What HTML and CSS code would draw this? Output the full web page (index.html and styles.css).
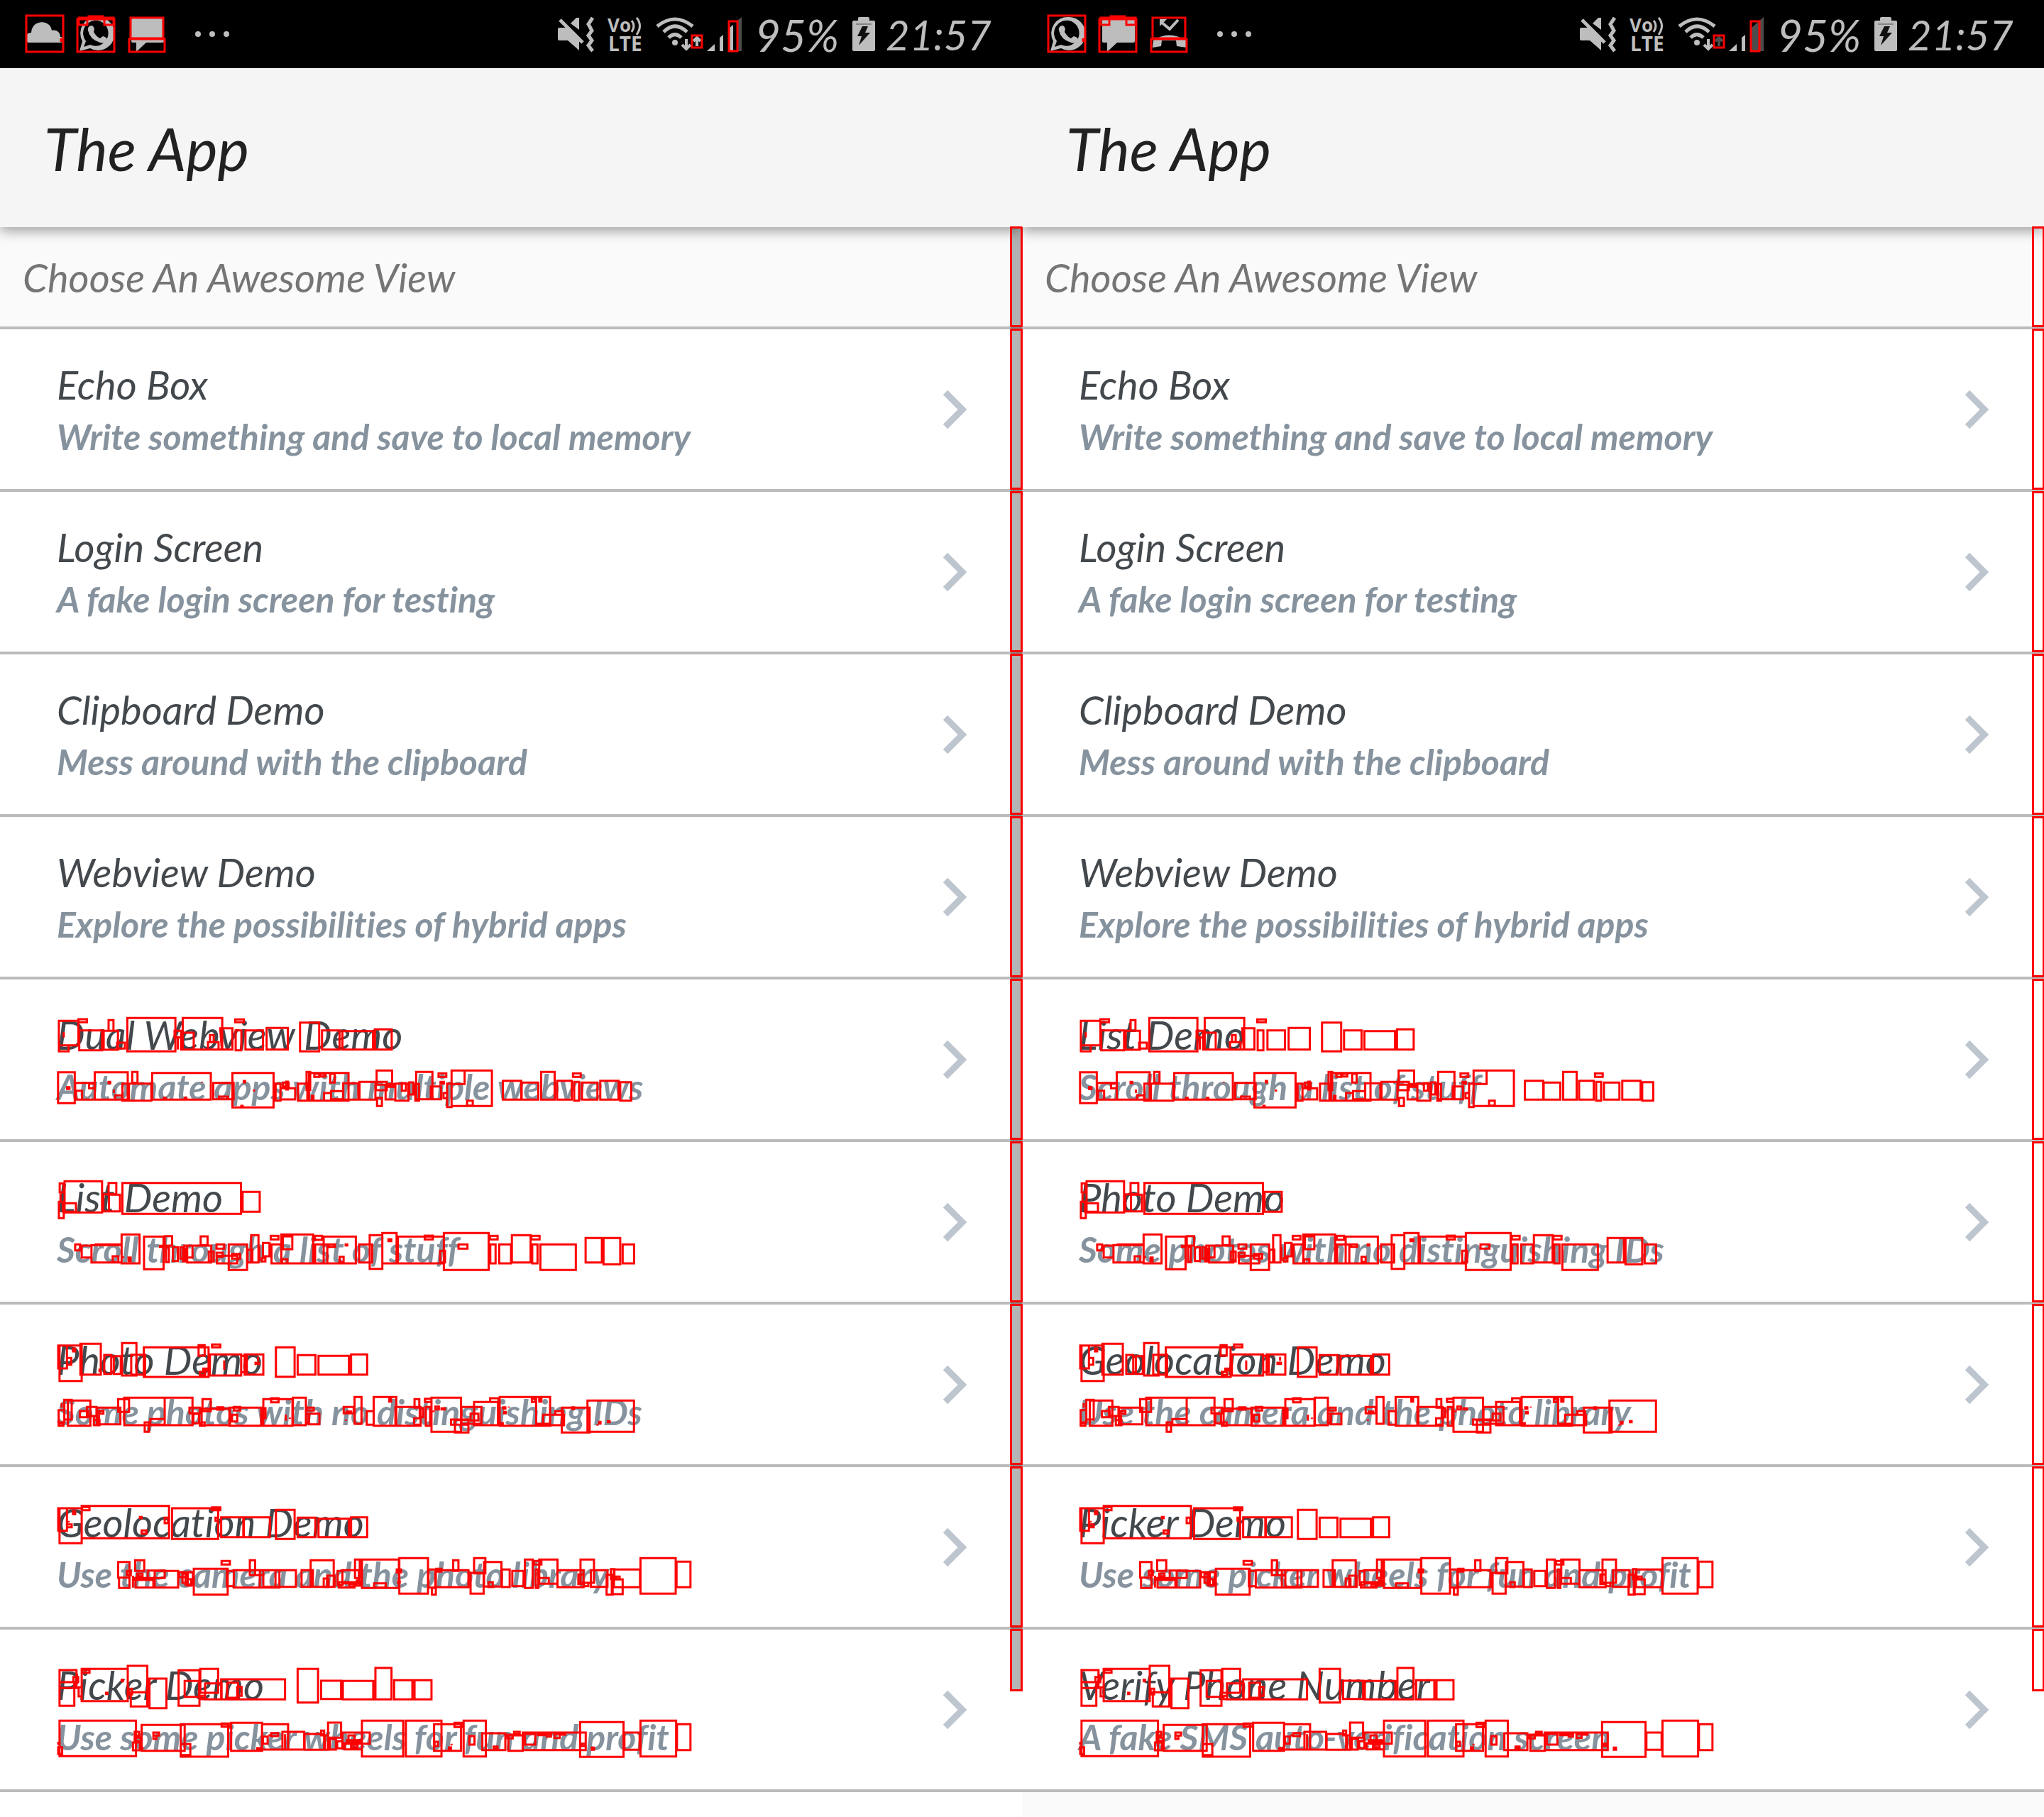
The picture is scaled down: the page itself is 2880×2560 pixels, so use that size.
FILE: index.html
```html
<!DOCTYPE html>
<html lang="en">
<head>
<meta charset="utf-8">
<title>The App</title>
<link rel="stylesheet" href="styles.css">
</head>
<body>
<svg class="defs" aria-hidden="true">
  <defs>
    <g id="i-cloud"><path d="M4 60c-6-2-5-14 4-14 1-19 27-19 29-3 7-2 12 3 12 9 5 0 5 8 0 8z" transform="translate(-2 0)"/></g>
    <g id="i-chat"><path d="M28 24a23 23 0 0 1 0 47q-6 0-11-3L2 72l4-14a23 23 0 0 1 22-34zm0 5a18 18 0 0 0-17 29l-3 8 9-3a18 18 0 1 0 11-34z" fill-rule="evenodd"/><path d="M16 37q5-3 7 4l-1 4q4 7 9 9l4-3q8 2 5 7-3 4-9 2-14-4-17-17-1-4 2-6z"/></g>
    <g id="i-msg"><path d="M5 26h42q2 0 2 2v30q0 2-2 2H24L10 73V60H5q-2 0-2-2V28q0-2 2-2z"/></g>
    <g id="i-missed"><path d="M3 57q21-15 47 0v10l-14-2-1-8H15l-1 8-12 2z"/><path d="M13 30l13 11 12-13" fill="none" stroke="#bdbdbd" stroke-width="4"/><path d="M12 27h10L12 37z"/></g>
    <g id="i-dots"><circle cx="25" cy="48" r="4"/><circle cx="45" cy="48" r="4"/><circle cx="65" cy="48" r="4"/></g>
    <g id="i-mute"><path d="M4 39h10l5 5 13 14v13L16 57H4q-2 0-2-2V41q0-2 2-2z"/><path d="M20 33l8-8h4v17z"/><path d="M5 28l32 32" stroke="#bdbdbd" stroke-width="5"/><path d="M51 25l-6 9 5 9-5 7 5 7-5 7 6 8" fill="none" stroke="#bdbdbd" stroke-width="5"/></g>
    <g id="i-volte"><text x="0" y="45" font-size="26">Vo</text><text x="1" y="72" font-size="28">LTE</text><path d="M34 29q6 7 0 16M41 25q9 11 0 24" fill="none" stroke="#bdbdbd" stroke-width="3"/></g>
    <g id="i-wifi"><path d="M6 37q25-20 50 0M15 45q16-16 33 0M22 53q9-9 18 0" fill="none" stroke="#bdbdbd" stroke-width="5"/><circle cx="31" cy="60" r="4"/><path d="M47 55v14M41 63l6 6 6-6" fill="none" stroke="#bdbdbd" stroke-width="4"/></g>
    <g id="i-battery"><path d="M8 29v-3q0-2 2-2h12q2 0 2 2v3h6q2 0 2 2v39q0 2-2 2H2q-2 0-2-2V31q0-2 2-2z"/><path d="M5 34h22" stroke="#4d4d4d" stroke-width="1"/><path d="M14 37h8l-4 9h7L9 64l4-13H7z" fill="#111"/></g>
    <g id="marks">
      <path d="M37 22H89V73H37ZM109 27H161V73H109ZM111 25H123V35H111ZM147 25H160V35H147ZM125 23H145V25H125ZM184 25H230V54H184ZM182 55H232V73H182ZM86 54V59M975 50H989V67H975ZM1027 30H1039V72H1027Z"/>
      <g transform="translate(60 1420) scale(.57398 .33333)">
        <path d="M40 55H88V158H40ZM40 158H64V184H40ZM88 48H109V61H88ZM90 95H146V179H90ZM162 52H174V97H162ZM150 97H185V177H150ZM183 147H202V172H183ZM208 43H326V184H208ZM344 43H441V176H344ZM324 97H344V125H324ZM332 120V176M340 105H371V176H340ZM406 145H432V176H406ZM411 115H420V145H411ZM436 86H466V176H440ZM473 49H494V61H473ZM474 95H488V179H474ZM498 95H541V176H498ZM550 85H602V176H550ZM632 62H679V184H632ZM686 95H729V176H686ZM736 98H811V176H736ZM816 91H857V176H816ZM52 102V125"/>
        <path d="M38 272H79V403H38ZM60 335H66V343H60ZM80 317H128V388H80ZM82 350H97V388H82ZM114 320H128V340H114ZM128 272H209V388H128ZM162 313H166V318H162ZM175 345V360M178 370H195V388H178ZM220 271H233V317H220ZM196 320H212V392H196ZM212 320H267V392H212ZM269 275H413V388H269ZM298 380H302V386H298ZM349 380H353V386H349ZM391 312V316M419 317H469V386H419ZM433 375H455V386H433ZM466 275H567V421H466ZM494 309H497V315H494ZM519 345V354M488 414H491V418H488ZM572 320H584V392H572ZM584 340H620V387H584ZM590 316H604V332H590ZM598 312H602V345H598ZM627 320H650V392H627ZM648 271H657V347H648ZM654 275H751V392H654ZM667 278H679V292H667ZM682 278H694V290H682ZM706 278H717V316H706ZM661 372H665V386H661ZM691 360H708V392H691ZM708 352H738V386H708ZM738 319H775V388H738ZM778 313H817V388H778ZM820 265H858V325H820ZM818 313H845V348H818ZM845 322H862V334H845ZM821 380H833V415H821ZM842 332H866V387H842ZM866 320H898V392H866ZM882 318H892V350H882ZM900 315H910V366H900ZM915 322H924V392H915ZM917 271H957V386H917ZM953 332H978V386H953ZM972 277H991V292H972ZM977 313H985V320H977ZM984 360H993V382H984ZM993 320H1004V419H993ZM1004 265H1103V415H1004ZM1004 265H1036V322H1004ZM1042 392H1056V413H1042ZM1130 308H1175V388H1130ZM1176 316H1217V388H1176ZM1224 271H1257V388H1224ZM1263 308H1299V388H1263ZM1302 277H1321V292H1302ZM1305 313H1317V392H1305ZM1324 316H1362V388H1324ZM1369 308H1414V388H1369ZM1418 314H1445V392H1418Z"/>
        <path d="M42 742H52V780H42ZM54 733H146V865H54ZM40 820H52V889H40ZM50 826H82V862H50ZM44 785V815M149 788H163V860H149ZM162 740H181V787H162ZM163 790H190V860H163ZM196 740H487V871H196ZM491 778H533V862H491ZM80 1000H92V1025H80ZM96 1005H120V1055H96ZM120 1003H194V1076H120ZM128 1000H194V1076M172 1050H186V1075H172ZM194 958H238V1080H194ZM197 1050V1058M211 1055H216V1070H211ZM249 967H297V1105H249ZM288 1006H292V1010H288ZM300 965H318V1005H300ZM303 1010H310V1075H303ZM320 1012H332V1070H320ZM338 1012H348V1060H338ZM345 1018H350V1072H345ZM348 1005H368V1055H348ZM355 1005H414V1076H355ZM388 966H405V1003H388ZM408 1030H420V1072H408ZM427 1000H446V1018H427ZM427 1035H442V1052H427ZM428 1048H478V1080H428ZM457 1000H502V1108H457ZM465 1040H485V1060H465ZM512 961H530V1076H512ZM503 1022H515V1076H503ZM532 1010V1070M541 994H557V1050H541ZM538 1058H547V1072H538ZM560 964H579V979H560ZM562 1000H586V1080H562ZM586 958H664V1080H586ZM590 966H613V1020H590ZM588 1063H601V1080H588ZM668 964H686V980H668ZM669 1000H699V1080H669ZM690 967H769V1080H690ZM703 1000H718V1010H703ZM744 1000H748V1004H744ZM729 1052H739V1074H729ZM777 1000H809V1076H777ZM803 961H834V1103H803ZM834 952H869V1080H834ZM849 978H856V986H849ZM872 967H985V1080H872ZM938 963H958V979H938ZM985 952H1095V1108H985ZM976 1027H988V1076H976ZM1021 1000H1043V1018H1021ZM1098 964H1117V979H1098ZM1099 1000H1112V1080H1099ZM1121 1000H1150V1080H1121ZM1152 961H1198V1076H1152ZM1200 964H1220V979H1200ZM1202 1000H1215V1080H1202ZM1222 1000H1309V1108H1222ZM1333 973H1373V1076H1333ZM1377 973H1418V1084H1377ZM1424 1000H1452V1080H1424Z"/>
      </g>
      <g transform="translate(60 1880) scale(.61224 .33333)">
        <path d="M36 47H56V144H36ZM39 47H90V197H39ZM87 40H134V170H87ZM70 60H75V72H70ZM56 100H66V128H56ZM131 145V160M142 87H158V167H142ZM158 95H164V160H158ZM164 92H180V167H164ZM183 37H216V174H183ZM204 86H236V170H204ZM233 55H382V180H233ZM359 46H373V90H359ZM390 43H409V55H390ZM362 158H374V172H362ZM370 145H378V152H370ZM385 85H457V174H385ZM418 110V150M457 91H470V160H457ZM465 85H508V170H465ZM490 120H498V125H490ZM496 95V112M537 55H580V179H537ZM587 88H628V170H587ZM635 91H705V170H635ZM710 85H747V170H710Z"/>
        <path d="M37 320H50V372H37ZM37 376H48V386H37ZM44 290V310M50 277H67V360H50ZM58 280H110V386H58ZM86 324H104V350H86ZM102 307H124V345H102ZM118 346H130V384H118ZM118 362H131V384H118ZM130 323H140V335H130ZM125 310H179V380H125ZM174 274H199V328H174ZM188 268H281V384H188ZM235 372H245V412H235ZM248 358H281V382H248ZM281 268H345V384H281ZM338 310H362V334H338ZM347 336H360V376H347ZM368 274H387V325H368ZM362 372H373V386H362ZM366 314H431V384H366ZM402 308H416V318H402ZM430 310H503V386H430ZM440 307H455V322H440ZM436 340H448V368H436ZM508 274H575V386H508ZM526 270H543V287H526ZM505 312H513V354H505ZM560 340V365M569 352V357M576 268H606V384H576ZM608 310H624V322H608ZM606 335H612V376H606ZM613 335H637V380H613ZM693 307H716V334H693ZM700 326H710V332H700ZM698 360V366M718 265H734V378H718ZM746 325H762V382H746ZM762 265H814V386H762ZM798 270H802V284H798ZM812 307H870V386H812ZM856 274H867V310H856ZM855 355H870V382H855ZM868 312H876V350H868ZM880 272H895V286H880ZM882 307H892V386H882ZM895 268H963V412H895ZM904 305H912V317H904ZM918 313H926V317H918ZM900 322V329M940 360H980V382H940ZM949 362H980V415H949ZM964 307H1010V378H964ZM993 286H1048V384H993ZM985 335H1003V364H985ZM1030 270H1049V286H1030ZM1052 265H1168V386H1052ZM1060 308H1065V314H1060ZM1062 328H1066V334H1062ZM1054 375H1059V381H1054ZM1073 305V310M1126 272H1134V286H1126ZM1136 265H1168V378H1136ZM1143 272H1148V284H1143ZM1152 340H1200V384H1152ZM1180 325H1198V340H1180ZM1195 310H1259V415H1195ZM1219 308H1223V316H1219ZM1254 280H1361V412H1254ZM1281 370H1284V377H1281ZM1301 367H1305V371H1301ZM1277 380V386"/>
        <path d="M36 735H56V830H36ZM39 735H90V883H39ZM70 748H75V760H70ZM56 803H67V815H56ZM60 788V796M90 725H291V862H90ZM91 730H108V743H91ZM224 772H228V777H224ZM228 829H239V842H228ZM281 775H289V798H281ZM298 735H404V865H298ZM390 731H409V743H390ZM398 775H404V788H398ZM411 773H462V857H411ZM463 773H523V857H463ZM537 742H580V865H537ZM587 775H628V857H587ZM635 779H705V857H635ZM710 773H747V857H710Z"/>
        <path d="M174 962H200V1028H174ZM176 1028H200V1072H176ZM194 1000H203V1018H194ZM208 1020V1070M213 955H234V1000H213ZM218 1011H230V1022H218ZM242 998H281V1030H242ZM214 1038H255V1070H214ZM212 1030H240V1038H212ZM258 1000H312V1070H258ZM314 1005H330V1026H314ZM322 1012H334V1050H322ZM334 1035H342V1062H334ZM329 1005H346V1060H329ZM348 991H426V1100H348ZM412 958H431V973H412ZM424 1000H440V1064H424ZM440 997H508V1070H440ZM477 955H489V1018H477ZM489 1018H508V1070M500 997H545V1070H500ZM508 997H583V1067H508ZM536 997V1067M596 997H622V1067H596ZM617 955H670V1067H617ZM647 1032H658V1068H647ZM655 1020H672V1067H655ZM679 1000H690V1060H679ZM690 997H728V1052H690ZM682 1048H718V1070H682ZM719 952H730V1030H719ZM723 1040H731V1062H723ZM706 1055H716V1066H706ZM735 952H820V1072H735ZM763 1052H790V1070H763ZM821 946H887V1096H821ZM815 994H825V1006H815ZM818 1044H822V1050H818ZM888 994H904V1070H888ZM906 991H918V1003H906ZM896 1072H905V1100H896ZM905 997H980V1069H905ZM945 955H957V1000H945ZM993 946H1019V1010H993ZM985 1008H1015V1096H985ZM1016 962H1056V1066H1016ZM1026 1048H1036V1068H1026ZM1057 994H1075V1068H1057ZM1081 1000H1107V1064H1081ZM1110 952H1128V1072H1110ZM1131 958H1148V973H1131ZM1135 994H1141V1072H1135ZM1143 952H1185V1054H1143ZM1143 1030H1165V1054H1143ZM1185 997H1245V1069H1185ZM1238 952H1269V1050H1238ZM1233 1015H1245V1055H1233ZM1246 1050H1256V1064H1246ZM1262 997H1300V1067H1262ZM1298 1016H1312V1100H1298ZM1308 992H1316V1034H1308ZM1315 994H1375V1069H1315ZM1310 1036H1335V1098H1310ZM1320 1024H1328V1034H1320ZM1376 946H1457V1096H1376ZM1459 961H1491V1069H1459Z"/>
      </g>
      <g transform="translate(60 2330) scale(.61224 .33333)">
        <path d="M39 69H78V145H39ZM39 120H73V220H39ZM71 98H82V120H71ZM79 84V98M83 142H90V180H83ZM90 64H196V200H90ZM91 68H108V80H91ZM146 165H149V170H146ZM182 110H185V116H182ZM196 51H241V163H196ZM198 148H206V172H198ZM203 163H241V223H203ZM246 105H285V230H246ZM313 70H361V220H313ZM327 115H360V182H327ZM363 64H404V165H363ZM366 178H374V192H366ZM374 125H412V193H374ZM411 108H558V193H411ZM425 122H450V186H425ZM448 140H458V178H448ZM587 64H634V206H587ZM641 114H687V191H641ZM691 115H761V193H691ZM766 60H803V193H766ZM809 112H851V193H809ZM856 112H895V193H856Z"/>
        <path d="M39 283H215V433H39ZM36 395H45V424H36ZM36 372V385M208 375H224V408H208ZM212 330H222V346H212ZM212 355H226V370H212ZM230 396V402M228 301H327V410H228ZM255 333H268V346H255ZM255 346H262V360H255ZM318 298H427V435H318ZM318 382H340V428H318ZM412 295H433V308H412ZM434 292H505V410H434ZM507 350H518V380H507ZM526 335H542V348H526ZM520 345H526V348M494 399H500V405H494ZM505 298H565V405H505ZM552 330H602V405H552ZM558 340V403M603 339H648V406H603ZM657 291H687V355H657ZM641 325H648V345H641ZM650 345H657V406H650ZM661 360H675V405H661ZM678 370H690V400H678ZM690 333H753V380H690ZM704 345H718V365H704ZM700 365H735V372H700ZM695 378H735V404H695ZM710 385H725V395H710ZM735 283H830V434H735ZM836 283H918V434H836ZM901 298H963V410H901ZM902 372H910V390H902ZM948 292H968V310H948ZM941 380V388M935 396H940V408H935ZM969 283H1020V434H969ZM982 348H994V384H982ZM1012 336H1065V407H1012ZM1038 392H1047V402H1038ZM1072 345H1105V410H1072ZM1070 342H1082V358H1070ZM1085 330H1098V340H1085ZM1110 339H1134V384H1110ZM1105 333H1250V407H1105ZM1140 338H1155V344H1140ZM1160 340H1170V350H1160ZM1178 340H1190V356H1178ZM1195 338H1203V342H1195ZM1240 380H1250V390H1240ZM1237 289H1337V436H1237ZM1264 397H1269V406H1264ZM1339 333H1374V406H1339ZM1376 283H1458V434H1376ZM1460 298H1491V407H1460Z"/>
      </g>
    </g>
  </defs>
</svg>
<main class="compare">
  <section class="screen scrolling">
    <div class="status">
      <svg class="notice"><use href="#i-cloud"/></svg>
      <svg class="notice"><use href="#i-chat"/></svg>
      <svg class="notice"><use href="#i-msg"/></svg>
      <svg class="more"><use href="#i-dots"/></svg>
      <svg class="mute"><use href="#i-mute"/></svg>
      <svg class="volte"><use href="#i-volte"/></svg>
      <svg class="wifi"><use href="#i-wifi"/><path d="M62 65V54M57 58l5-5 5 5" fill="none" stroke="#bdbdbd" stroke-width="4"/></svg>
      <svg class="signal"><path d="M0 72l11-10v10zM18 72V53l5-4v23zM32 72V39l5-4v37z"/><path d="M43 72V29l6-5v48z" fill="#4d4d4d"/></svg>
      <span class="charge">95%</span>
      <svg class="battery"><use href="#i-battery"/></svg>
      <time class="clock">21:57</time>
    </div>
    <header class="bar"><h1>The App</h1></header>
    <div class="content">
      <h2 class="heading">Choose An Awesome View<i class="edge"></i></h2>
      <ul class="views">
        <li><a class="row" href="#"><span class="name">Echo Box</span><span class="about">Write something and save to local memory</span><svg class="chevron"><path d="M4 4l24 24L4 52"/></svg><i class="edge"></i></a></li>
        <li><a class="row" href="#"><span class="name">Login Screen</span><span class="about">A fake login screen for testing</span><svg class="chevron"><path d="M4 4l24 24L4 52"/></svg><i class="edge"></i></a></li>
        <li><a class="row" href="#"><span class="name">Clipboard Demo</span><span class="about">Mess around with the clipboard</span><svg class="chevron"><path d="M4 4l24 24L4 52"/></svg><i class="edge"></i></a></li>
        <li><a class="row" href="#"><span class="name">Webview Demo</span><span class="about">Explore the possibilities of hybrid apps</span><svg class="chevron"><path d="M4 4l24 24L4 52"/></svg><i class="edge"></i></a></li>
        <li><a class="row" href="#"><span class="name">Dual Webview Demo</span><span class="about">Automate apps with multiple webviews</span><svg class="chevron"><path d="M4 4l24 24L4 52"/></svg><i class="edge"></i></a></li>
        <li><a class="row" href="#"><span class="name">List Demo</span><span class="about">Scroll through a list of stuff</span><svg class="chevron"><path d="M4 4l24 24L4 52"/></svg><i class="edge"></i></a></li>
        <li><a class="row" href="#"><span class="name">Photo Demo</span><span class="about">Some photos with no distinguishing IDs</span><svg class="chevron"><path d="M4 4l24 24L4 52"/></svg><i class="edge"></i></a></li>
        <li><a class="row" href="#"><span class="name">Geolocation Demo</span><span class="about">Use the camera and the photo library</span><svg class="chevron"><path d="M4 4l24 24L4 52"/></svg><i class="edge"></i></a></li>
        <li><a class="row" href="#"><span class="name">Picker Demo</span><span class="about">Use some picker wheels for fun and profit</span><svg class="chevron"><path d="M4 4l24 24L4 52"/></svg><i class="edge short"></i></a></li>
      </ul>
      <div class="thumb"></div>
    </div>
    <svg class="overlay" aria-hidden="true"><use href="#marks"/></svg>
  </section>
  <section class="screen">
    <div class="status">
      <svg class="notice"><use href="#i-chat"/></svg>
      <svg class="notice"><use href="#i-msg"/></svg>
      <svg class="notice"><use href="#i-missed"/></svg>
      <svg class="more"><use href="#i-dots"/></svg>
      <svg class="mute"><use href="#i-mute"/></svg>
      <svg class="volte"><use href="#i-volte"/></svg>
      <svg class="wifi"><use href="#i-wifi"/><path d="M62 65V54M57 58l5-5 5 5" fill="none" stroke="#4d4d4d" stroke-width="4"/></svg>
      <svg class="signal"><path d="M0 72l11-10v10zM18 72V53l5-4v23z"/><path d="M32 72V39l17-15v48z" fill="#4d4d4d"/></svg>
      <span class="charge">95%</span>
      <svg class="battery"><use href="#i-battery"/></svg>
      <time class="clock">21:57</time>
    </div>
    <header class="bar"><h1>The App</h1></header>
    <div class="content">
      <h2 class="heading">Choose An Awesome View<i class="edge"></i></h2>
      <ul class="views">
        <li><a class="row" href="#"><span class="name">Echo Box</span><span class="about">Write something and save to local memory</span><svg class="chevron"><path d="M4 4l24 24L4 52"/></svg><i class="edge"></i></a></li>
        <li><a class="row" href="#"><span class="name">Login Screen</span><span class="about">A fake login screen for testing</span><svg class="chevron"><path d="M4 4l24 24L4 52"/></svg><i class="edge"></i></a></li>
        <li><a class="row" href="#"><span class="name">Clipboard Demo</span><span class="about">Mess around with the clipboard</span><svg class="chevron"><path d="M4 4l24 24L4 52"/></svg><i class="edge"></i></a></li>
        <li><a class="row" href="#"><span class="name">Webview Demo</span><span class="about">Explore the possibilities of hybrid apps</span><svg class="chevron"><path d="M4 4l24 24L4 52"/></svg><i class="edge"></i></a></li>
        <li><a class="row" href="#"><span class="name">List Demo</span><span class="about">Scroll through a list of stuff</span><svg class="chevron"><path d="M4 4l24 24L4 52"/></svg><i class="edge"></i></a></li>
        <li><a class="row" href="#"><span class="name">Photo Demo</span><span class="about">Some photos with no distinguishing IDs</span><svg class="chevron"><path d="M4 4l24 24L4 52"/></svg><i class="edge"></i></a></li>
        <li><a class="row" href="#"><span class="name">Geolocation Demo</span><span class="about">Use the camera and the photo library</span><svg class="chevron"><path d="M4 4l24 24L4 52"/></svg><i class="edge"></i></a></li>
        <li><a class="row" href="#"><span class="name">Picker Demo</span><span class="about">Use some picker wheels for fun and profit</span><svg class="chevron"><path d="M4 4l24 24L4 52"/></svg><i class="edge"></i></a></li>
        <li><a class="row" href="#"><span class="name">Verify Phone Number</span><span class="about">A fake SMS auto-verification screen</span><svg class="chevron"><path d="M4 4l24 24L4 52"/></svg><i class="edge short"></i></a></li>
      </ul>
    </div>
    <svg class="overlay" aria-hidden="true"><use href="#marks"/></svg>
  </section>
</main>
</body>
</html>
```
FILE: styles.css
```css
* { box-sizing: border-box; }
body { margin: 0; font-family: Lato, sans-serif; font-style: italic; font-variant-ligatures: none; background: #fafafa; }
h1, h2, ul { margin: 0; padding: 0; font-weight: 400; }
ul { list-style: none; }
.defs { position: absolute; width: 0; height: 0; }

.compare { display: grid; grid-template-columns: 1fr 1fr; min-height: 100vh; overflow: hidden; }
.screen { position: relative; background: #fafafa; }
.scrolling { z-index: 1; background: #fff; }

/* status bar */
.status { display: flex; height: 96px; padding: 0 42px 0 38px; background: #000; color: #bdbdbd; font-size: 58px; line-height: 98px; }
.status svg { height: 96px; fill: #bdbdbd; flex: none; }
.notice { width: 52px; margin-right: 20px; }
.more { width: 90px; margin-right: auto; }
.mute { width: 56px; margin-right: 16px; }
.volte { width: 48px; margin-right: 16px; font: 700 28px "Open Sans", sans-serif; }
.wifi { width: 70px; margin-right: 6px; }
.signal { width: 50px; margin-right: 18px; }
.charge { width: 122px; margin-right: 15px; font-size: 62px; }
.battery { width: 32px; margin-right: 15px; }
.clock { width: 150px; }

/* app bar */
.bar { position: relative; z-index: 2; display: flex; align-items: center; height: 224px; padding: 0 62px; background: #f5f5f5; box-shadow: 0 6px 16px rgba(0, 0, 0, .35); clip-path: inset(0 0 -40px 0); }
.bar h1 { font-size: 84px; color: #212121; }

/* list */
.content { position: relative; }
.heading { position: relative; display: flex; align-items: center; height: 144px; padding: 0 32px; background: #fafafa; border-bottom: 4px solid #bbb; font-size: 56px; color: #757575; }
.row { position: relative; display: flex; flex-direction: column; gap: 11px; padding: 46px 120px 44px 80px; background: #fff; border-bottom: 4px solid #bbb; text-decoration: none; }
.name { font-size: 56px; line-height: 64px; color: #43484d; }
.about { font-size: 50px; line-height: 60px; font-weight: 700; color: #86939e; }
.chevron { position: absolute; right: 77px; top: 50%; width: 35px; height: 56px; margin-top: -28px; fill: none; stroke: #bdc6cf; stroke-width: 9; }

/* scroll thumb */
.thumb { position: absolute; top: 0; right: 0; width: 16px; height: 2060px; background: rgba(0, 0, 0, .29); }

/* difference markers */
.edge { position: absolute; z-index: 3; top: -1px; right: -1px; bottom: -1px; width: 18px; border: 3px solid #f00; }
.edge.short { bottom: auto; height: 88px; }
.overlay { position: absolute; z-index: 4; top: 0; left: 0; width: 100%; height: 100%; pointer-events: none; fill: none; stroke: #f00; stroke-width: 3; }
#marks path { vector-effect: non-scaling-stroke; }
```
